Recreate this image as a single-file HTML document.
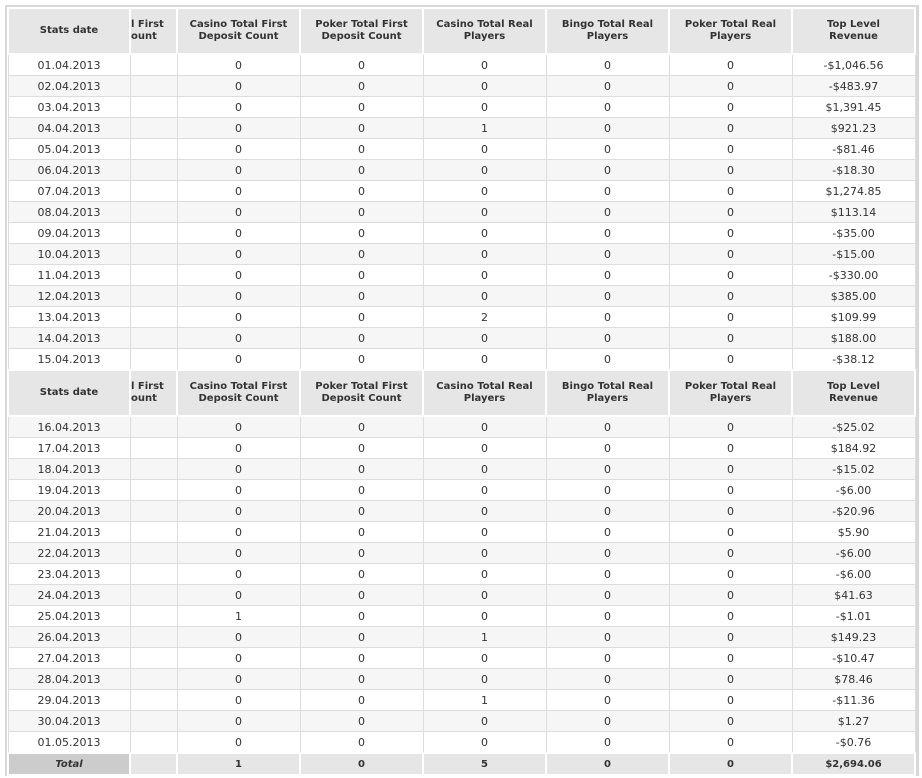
<!DOCTYPE html>
<html><head><style>
body{margin:0;background:#fff;font-family:"DejaVu Sans","Liberation Sans",sans-serif;font-size:11px;color:#333}
.wrap{position:absolute;left:5px;top:5px;width:909px;border-top:2px solid #d8d8d8;border-left:2px solid #d8d8d8;border-right:3px solid #d8d8d8}
table{border-collapse:collapse;table-layout:fixed;width:907px}
td,th{text-align:center;padding:0;overflow:hidden;white-space:nowrap}
th{background:#e6e6e6;border:2px solid #fff;height:44px;font-weight:bold;font-size:10px;line-height:12px;white-space:normal;color:#333}
td{height:20px;border:1px solid #ddd}
tr.e td{background:#f6f6f6}
.c2{text-align:left;padding-left:0}
tr.t td{background:#e6e6e6;border:2px solid #fff;height:20px;font-weight:bold;font-size:10px}
tr.t td.f{background:#ccc;font-style:italic}
</style></head><body><div class="wrap"><table>
<colgroup><col style="width:122px"><col style="width:47px"><col style="width:123px"><col style="width:123px"><col style="width:123px"><col style="width:123px"><col style="width:123px"><col style="width:123px"></colgroup>
<tr><th>Stats date</th><th class="c2">l First<br>ount</th><th>Casino Total First Deposit Count</th><th>Poker Total First Deposit Count</th><th>Casino Total Real Players</th><th>Bingo Total Real Players</th><th>Poker Total Real Players</th><th>Top Level<br>Revenue</th></tr>
<tr><td>01.04.2013</td><td></td><td>0</td><td>0</td><td>0</td><td>0</td><td>0</td><td>-$1,046.56</td></tr>
<tr class="e"><td>02.04.2013</td><td></td><td>0</td><td>0</td><td>0</td><td>0</td><td>0</td><td>-$483.97</td></tr>
<tr><td>03.04.2013</td><td></td><td>0</td><td>0</td><td>0</td><td>0</td><td>0</td><td>$1,391.45</td></tr>
<tr class="e"><td>04.04.2013</td><td></td><td>0</td><td>0</td><td>1</td><td>0</td><td>0</td><td>$921.23</td></tr>
<tr><td>05.04.2013</td><td></td><td>0</td><td>0</td><td>0</td><td>0</td><td>0</td><td>-$81.46</td></tr>
<tr class="e"><td>06.04.2013</td><td></td><td>0</td><td>0</td><td>0</td><td>0</td><td>0</td><td>-$18.30</td></tr>
<tr><td>07.04.2013</td><td></td><td>0</td><td>0</td><td>0</td><td>0</td><td>0</td><td>$1,274.85</td></tr>
<tr class="e"><td>08.04.2013</td><td></td><td>0</td><td>0</td><td>0</td><td>0</td><td>0</td><td>$113.14</td></tr>
<tr><td>09.04.2013</td><td></td><td>0</td><td>0</td><td>0</td><td>0</td><td>0</td><td>-$35.00</td></tr>
<tr class="e"><td>10.04.2013</td><td></td><td>0</td><td>0</td><td>0</td><td>0</td><td>0</td><td>-$15.00</td></tr>
<tr><td>11.04.2013</td><td></td><td>0</td><td>0</td><td>0</td><td>0</td><td>0</td><td>-$330.00</td></tr>
<tr class="e"><td>12.04.2013</td><td></td><td>0</td><td>0</td><td>0</td><td>0</td><td>0</td><td>$385.00</td></tr>
<tr><td>13.04.2013</td><td></td><td>0</td><td>0</td><td>2</td><td>0</td><td>0</td><td>$109.99</td></tr>
<tr class="e"><td>14.04.2013</td><td></td><td>0</td><td>0</td><td>0</td><td>0</td><td>0</td><td>$188.00</td></tr>
<tr><td>15.04.2013</td><td></td><td>0</td><td>0</td><td>0</td><td>0</td><td>0</td><td>-$38.12</td></tr>
<tr><th>Stats date</th><th class="c2">l First<br>ount</th><th>Casino Total First Deposit Count</th><th>Poker Total First Deposit Count</th><th>Casino Total Real Players</th><th>Bingo Total Real Players</th><th>Poker Total Real Players</th><th>Top Level<br>Revenue</th></tr>
<tr class="e"><td>16.04.2013</td><td></td><td>0</td><td>0</td><td>0</td><td>0</td><td>0</td><td>-$25.02</td></tr>
<tr><td>17.04.2013</td><td></td><td>0</td><td>0</td><td>0</td><td>0</td><td>0</td><td>$184.92</td></tr>
<tr class="e"><td>18.04.2013</td><td></td><td>0</td><td>0</td><td>0</td><td>0</td><td>0</td><td>-$15.02</td></tr>
<tr><td>19.04.2013</td><td></td><td>0</td><td>0</td><td>0</td><td>0</td><td>0</td><td>-$6.00</td></tr>
<tr class="e"><td>20.04.2013</td><td></td><td>0</td><td>0</td><td>0</td><td>0</td><td>0</td><td>-$20.96</td></tr>
<tr><td>21.04.2013</td><td></td><td>0</td><td>0</td><td>0</td><td>0</td><td>0</td><td>$5.90</td></tr>
<tr class="e"><td>22.04.2013</td><td></td><td>0</td><td>0</td><td>0</td><td>0</td><td>0</td><td>-$6.00</td></tr>
<tr><td>23.04.2013</td><td></td><td>0</td><td>0</td><td>0</td><td>0</td><td>0</td><td>-$6.00</td></tr>
<tr class="e"><td>24.04.2013</td><td></td><td>0</td><td>0</td><td>0</td><td>0</td><td>0</td><td>$41.63</td></tr>
<tr><td>25.04.2013</td><td></td><td>1</td><td>0</td><td>0</td><td>0</td><td>0</td><td>-$1.01</td></tr>
<tr class="e"><td>26.04.2013</td><td></td><td>0</td><td>0</td><td>1</td><td>0</td><td>0</td><td>$149.23</td></tr>
<tr><td>27.04.2013</td><td></td><td>0</td><td>0</td><td>0</td><td>0</td><td>0</td><td>-$10.47</td></tr>
<tr class="e"><td>28.04.2013</td><td></td><td>0</td><td>0</td><td>0</td><td>0</td><td>0</td><td>$78.46</td></tr>
<tr><td>29.04.2013</td><td></td><td>0</td><td>0</td><td>1</td><td>0</td><td>0</td><td>-$11.36</td></tr>
<tr class="e"><td>30.04.2013</td><td></td><td>0</td><td>0</td><td>0</td><td>0</td><td>0</td><td>$1.27</td></tr>
<tr><td>01.05.2013</td><td></td><td>0</td><td>0</td><td>0</td><td>0</td><td>0</td><td>-$0.76</td></tr>
<tr class="t"><td class="f">Total</td><td></td><td>1</td><td>0</td><td>5</td><td>0</td><td>0</td><td>$2,694.06</td></tr>
</table></div></body></html>
